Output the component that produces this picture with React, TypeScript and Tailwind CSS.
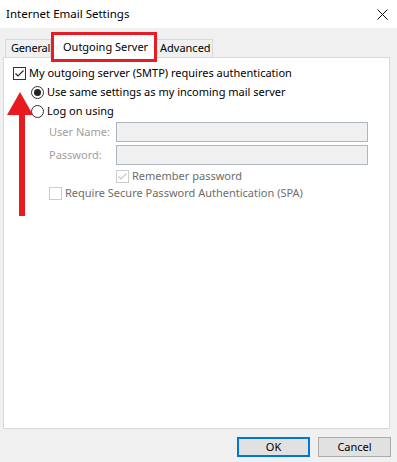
import React from "react";

const font = { fontFamily: '"Segoe UI", "Noto Sans", "Open Sans", sans-serif' };

function Check({ checked, disabled }: { checked?: boolean; disabled?: boolean }) {
  return (
    <span
      className={`flex h-[13px] w-[13px] shrink-0 items-center justify-center border bg-white ${
        disabled ? "border-[#cccccc]" : "border-[#333333]"
      }`}
    >
      {checked && (
        <svg width="11" height="11" viewBox="0 0 11 11">
          <path
            d="M1.5 5.5 L4 8 L9.5 2.5"
            fill="none"
            stroke={disabled ? "#c5c5c5" : "#222"}
            strokeWidth="1.1"
          />
        </svg>
      )}
    </span>
  );
}

function Radio({ checked }: { checked?: boolean }) {
  return (
    <span className="flex h-[13px] w-[13px] shrink-0 items-center justify-center rounded-full border border-[#333333] bg-white">
      {checked && <span className="h-[7px] w-[7px] rounded-full bg-[#222]" />}
    </span>
  );
}

export default function App() {
  return (
    <div className="relative flex h-[462px] w-[397px] flex-col overflow-hidden whitespace-nowrap bg-[#f0f0f0] text-[11px] text-black" style={font}>
      {/* title bar */}
      <div className="flex h-[28px] items-center justify-between bg-white pl-[6px] pr-[9px]">
        <span className="text-[11.5px]">Internet Email Settings</span>
        <svg width="11" height="11" viewBox="0 0 11 11">
          <path d="M0.5 0.5 L10.5 10.5 M10.5 0.5 L0.5 10.5" stroke="#111" strokeWidth="1" />
        </svg>
      </div>

      {/* tabs */}
      <div className="flex items-end pl-[5px] pt-[4px]">
        <div className="flex h-[18px] w-[46px] items-center border border-b-0 border-[#d9d9d9] bg-[#f0f0f0] pl-[5px] tracking-[-0.2px]">
          General
        </div>
        <div className="relative z-10 -mb-[5px] flex h-[30px] w-[106px] items-start border-[3px] border-[#e81c24] bg-white pl-[9px] pt-[4px]">
          Outgoing Server
        </div>
        <div className="flex h-[18px] w-[56px] items-center border border-b-0 border-l-0 border-[#d9d9d9] bg-[#f0f0f0] pl-[3px]">
          Advanced
        </div>
      </div>

      {/* panel */}
      <div className="ml-[3px] mr-[7px] h-[372px] border border-[#d9d9d9] bg-white pt-[6px]">
        <div className="flex h-[19px] items-center gap-[3px] pl-[9px]">
          <Check checked />
          <span>My outgoing server (SMTP) requires authentication</span>
        </div>
        <div className="flex h-[19px] items-center gap-[3px] pl-[27px]">
          <Radio checked />
          <span>Use same settings as my incoming mail server</span>
        </div>
        <div className="flex h-[19px] items-center gap-[3px] pl-[27px]">
          <Radio />
          <span>Log on using</span>
        </div>
        <div className="mt-[1px] flex h-[20px] items-center pl-[45px] pr-[21px]">
          <span className="w-[67px] text-[#a0a0a0]">User Name:</span>
          <div className="h-[20px] flex-1 border border-[#adb7c0] bg-[#f0f0f0]" />
        </div>
        <div className="mt-[3px] flex h-[20px] items-center pl-[45px] pr-[21px]">
          <span className="w-[67px] text-[#a0a0a0]">Password:</span>
          <div className="h-[20px] flex-1 border border-[#adb7c0] bg-[#f0f0f0]" />
        </div>
        <div className="mt-[3px] flex h-[17px] items-center gap-[3px] pl-[112px]">
          <Check checked disabled />
          <span className="text-[#6d6d6d]">Remember password</span>
        </div>
        <div className="flex h-[17px] items-center gap-[3px] pl-[45px]">
          <Check disabled />
          <span className="text-[#6d6d6d]">Require Secure Password Authentication (SPA)</span>
        </div>
      </div>

      {/* buttons */}
      <div className="mt-[8px] flex justify-end gap-[8px] pr-[6px]">
        <button className="h-[20px] w-[73px] border-2 border-[#0078d7] bg-[#e1e1e1] text-[11px]">OK</button>
        <button className="h-[20px] w-[73px] border border-[#adadad] bg-[#e1e1e1] text-[11px]">Cancel</button>
      </div>

      {/* annotation arrow */}
      <svg className="pointer-events-none absolute left-0 top-0" width="40" height="220" viewBox="0 0 40 220">
        <polygon points="20,92 33,115 7,115" fill="#e8191f" />
        <rect x="19" y="114" width="6" height="102" fill="#e8191f" />
      </svg>
    </div>
  );
}
